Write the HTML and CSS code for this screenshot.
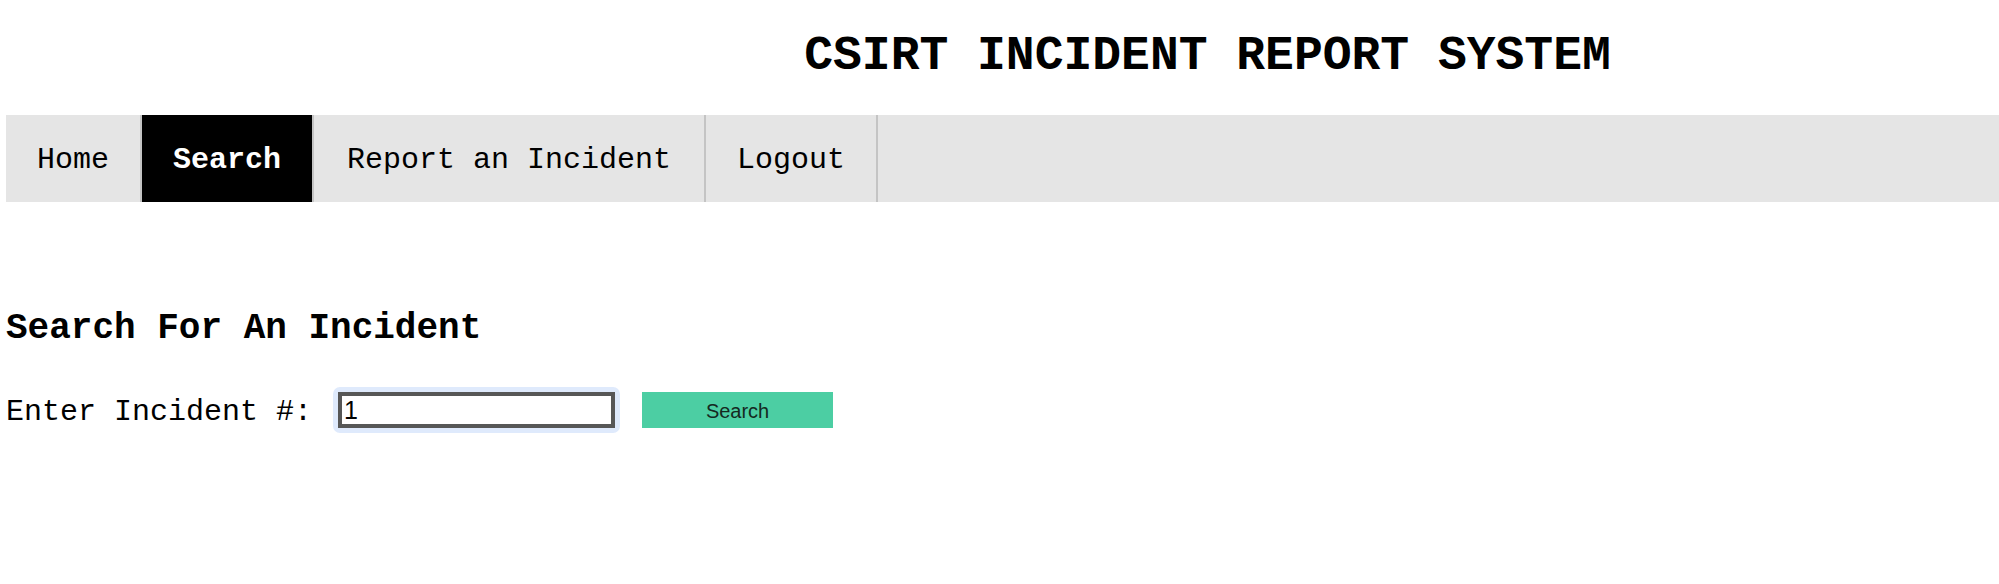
FILE: index.html
```html
<!DOCTYPE html>
<html lang="en">
<head>
<meta charset="utf-8">
<title>CSIRT Incident Report System</title>
<link rel="stylesheet" href="styles.css">
</head>
<body>
<div class="page">
  <header class="site-header">
    <h1 class="site-title">CSIRT INCIDENT REPORT SYSTEM</h1>
  </header>
  <nav class="main-nav">
    <a class="nav-item" href="#">Home</a>
    <a class="nav-item is-active" href="#">Search</a>
    <a class="nav-item nav-item-wide" href="#">Report an Incident</a>
    <a class="nav-item" href="#">Logout</a>
  </nav>
  <main class="content">
    <h2 class="section-title">Search For An Incident</h2>
    <form class="search-row" onsubmit="return false">
      <label class="search-label" for="incident">Enter Incident #:</label>
      <span class="focus-ring"><input class="search-input" id="incident" type="text" value="1"></span>
      <button class="search-button" type="submit">Search</button>
    </form>
  </main>
</div>
</body>
</html>
```

FILE: styles.css
```css
html, body {
  margin: 0;
  padding: 0;
  background: #ffffff;
}

.page {
  padding-left: 6px;
  font-family: "Liberation Mono", "Courier New", monospace;
  color: #000000;
}

.site-header {
  padding: 28px 0 31px 410px;
}

.site-title {
  margin: 0;
  font-size: 48px;
  line-height: 56px;
  font-weight: bold;
  text-align: center;
}

.main-nav {
  display: flex;
  height: 87px;
  background: #e5e5e5;
}

.nav-item {
  display: block;
  padding: 3px 31px 0;
  line-height: 84px;
  font-size: 30px;
  color: #000000;
  text-decoration: none;
  border-right: 2px solid #c4c4c4;
}

.nav-item-wide {
  padding: 3px 33px 0;
}

.nav-item.is-active {
  background: #000000;
  color: #ffffff;
  font-weight: bold;
}

.content {
  padding-top: 106px;
}

.section-title {
  margin: 0;
  font-size: 36px;
  line-height: 42px;
  font-weight: bold;
}

.search-row {
  display: flex;
  align-items: center;
  margin: 37px 0 0;
}

.search-label {
  font-size: 30px;
  line-height: 36px;
  padding-top: 3px;
  margin-right: 21px;
}

.focus-ring {
  display: flex;
  padding: 5px;
  background: #dfeafc;
  border-radius: 7px;
}

.search-input {
  box-sizing: border-box;
  width: 277px;
  height: 36px;
  margin: 0;
  padding: 0 2px;
  border: 4px solid #575757;
  background: #ffffff;
  font-family: "Liberation Sans", Arial, sans-serif;
  font-size: 25px;
  color: #000000;
  outline: none;
}

.search-button {
  box-sizing: border-box;
  width: 191px;
  height: 36px;
  margin-left: 22px;
  padding: 2px 0 0;
  border: none;
  background: #4ccea3;
  font-family: "Liberation Sans", Arial, sans-serif;
  font-size: 20px;
  color: #15291f;
  cursor: pointer;
}
```
